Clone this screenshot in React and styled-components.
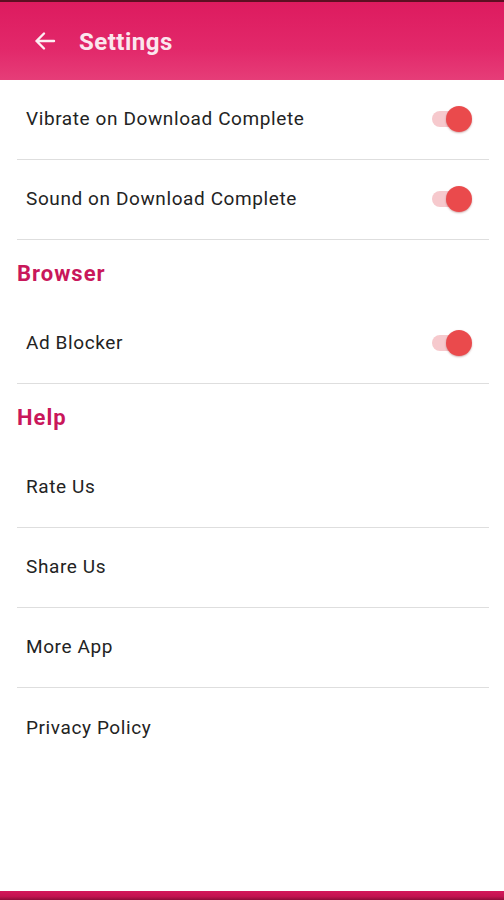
import React from "react";
import styled, { createGlobalStyle } from "styled-components";

const GlobalStyle = createGlobalStyle`
  html, body {
    margin: 0;
    padding: 0;
    background: #ffffff;
  }
  body {
    font-family: Roboto, "Noto Sans", "Liberation Sans", sans-serif;
  }
`;

const sections = [
  {
    title: null,
    items: [
      { label: "Vibrate on Download Complete", toggle: true },
      { label: "Sound on Download Complete", toggle: true },
    ],
  },
  {
    title: "Browser",
    items: [{ label: "Ad Blocker", toggle: true }],
  },
  {
    title: "Help",
    items: [
      { label: "Rate Us" },
      { label: "Share Us" },
      { label: "More App" },
      { label: "Privacy Policy", last: true },
    ],
  },
];

const BackArrow = () => (
  <svg width="24" height="24" viewBox="0 0 24 24" fill="none">
    <path
      d="M21 12H3.5M11 4.5L3.5 12L11 19.5"
      stroke="#fdeef3"
      strokeWidth="2.4"
      strokeLinecap="round"
      strokeLinejoin="round"
    />
  </svg>
);

const App = () => {
  return (
    <Page>
      <GlobalStyle />
      <StatusStrip />
      <Header>
        <BackButton>
          <BackArrow />
        </BackButton>
        <Title>Settings</Title>
      </Header>
      <List>
        {sections.map((section, i) => (
          <Section key={i}>
            {section.title && <SectionTitle>{section.title}</SectionTitle>}
            {section.items.map((item) => (
              <Row key={item.label} last={item.last}>
                <Label>{item.label}</Label>
                {item.toggle && (
                  <Switch>
                    <Track />
                    <Thumb />
                  </Switch>
                )}
              </Row>
            ))}
          </Section>
        ))}
      </List>
      <BottomBar />
    </Page>
  );
};

export default App;

const Page = styled.div`
  width: 504px;
  height: 900px;
  display: flex;
  flex-direction: column;
  background: #ffffff;
  overflow: hidden;
`;

const StatusStrip = styled.div`
  height: 2px;
  background: #5c0f22;
`;

const Header = styled.div`
  height: 78px;
  display: flex;
  align-items: center;
  padding-left: 33px;
  gap: 20px;
  background: linear-gradient(180deg, #dd1b5f 0%, #e2286a 60%, #e63d78 100%);
  box-sizing: border-box;
`;

const BackButton = styled.div`
  display: flex;
  align-items: center;
  width: 26px;
  height: 26px;
`;

const Title = styled.h1`
  margin: 0;
  padding-top: 2px;
  font-size: 24px;
  font-weight: 700;
  color: #fbe6ee;
  letter-spacing: 0.5px;
`;

const List = styled.div`
  flex: 1;
  display: flex;
  flex-direction: column;
  padding: 0 15px 0 17px;
`;

const Section = styled.div`
  display: flex;
  flex-direction: column;
`;

const SectionTitle = styled.div`
  height: 64px;
  display: flex;
  align-items: center;
  padding-top: 3px;
  box-sizing: border-box;
  font-size: 22px;
  font-weight: 700;
  letter-spacing: 1px;
  color: #c9175b;
`;

const Row = styled.div`
  height: 80px;
  display: flex;
  align-items: center;
  justify-content: space-between;
  padding: 0 17px 2px 9px;
  box-sizing: border-box;
  border-bottom: ${({ last }) => (last ? "none" : "1.5px solid #dedede")};
`;

const Label = styled.span`
  font-size: 19px;
  letter-spacing: 0.6px;
  color: #232323;
`;

const Switch = styled.div`
  position: relative;
  width: 40px;
  height: 28px;
  display: flex;
  align-items: center;
`;

const Track = styled.div`
  width: 34px;
  height: 16px;
  border-radius: 8px;
  background: #f6c9cd;
`;

const Thumb = styled.div`
  position: absolute;
  right: 0;
  top: 1px;
  width: 26px;
  height: 26px;
  border-radius: 50%;
  background: #ea4a4c;
  box-shadow: 0 1px 2px rgba(120, 20, 20, 0.35);
`;

const BottomBar = styled.div`
  height: 9px;
  background: linear-gradient(180deg, #d4175a 0%, #c3124f 60%, #8e0d3a 100%);
`;
